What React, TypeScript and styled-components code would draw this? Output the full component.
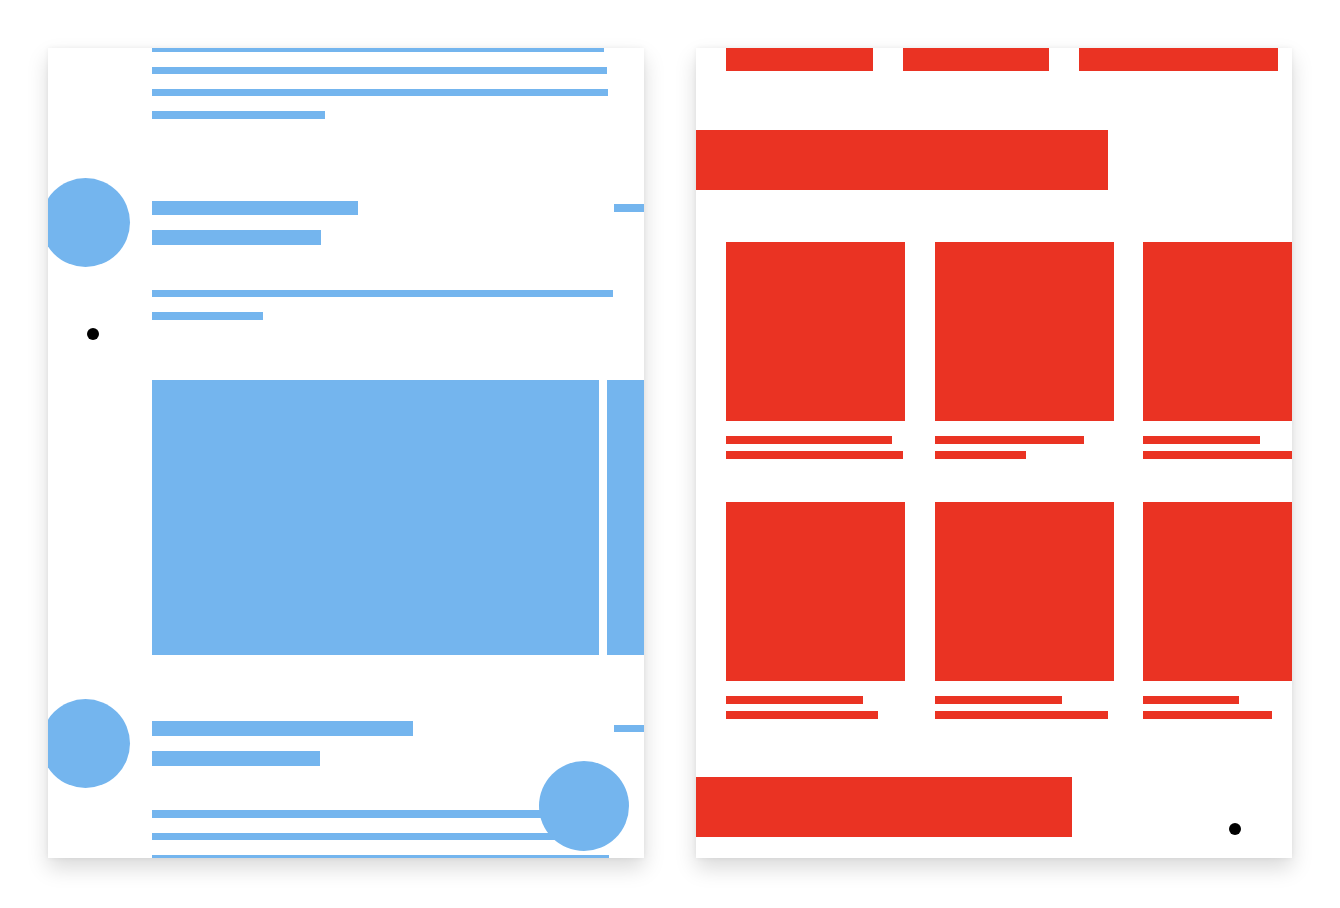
import React from 'react'
import styled, { createGlobalStyle } from 'styled-components'

const BLUE = '#74b5ee'
const RED = '#ea3323'

const GlobalStyle = createGlobalStyle`
	html, body {
		margin: 0;
		padding: 0;
		background: #ffffff;
		font-family: 'Liberation Sans', Arial, sans-serif;
	}
`

const Stage = styled.div`
	display: flex;
	gap: 52px;
	padding: 48px 0 0 48px;
	width: 1340px;
	height: 908px;
	box-sizing: border-box;
`

const Sheet = styled.div`
	position: relative;
	width: 596px;
	height: 810px;
	flex: 0 0 auto;
	overflow: hidden;
	background: #ffffff;
	box-shadow: 0 10px 20px rgba(0, 0, 0, 0.15), 0 0 5px rgba(0, 0, 0, 0.06);
`

const Bar = styled.div<{ $w?: number; $h?: number; $color: string }>`
	flex: 0 0 auto;
	width: ${(p) => (p.$w ? `${p.$w}px` : 'auto')};
	height: ${(p) => p.$h ?? 7}px;
	background: ${(p) => p.$color};
`

const Dot = styled.div`
	width: 12px;
	height: 12px;
	border-radius: 50%;
	background: #000;
	flex: 0 0 auto;
`

/* ---------- feed (left sheet) ---------- */

const Feed = styled.div`
	display: flex;
	flex-direction: column;
	margin-top: -3px;
`

const TextBlock = styled.div<{ $top?: number }>`
	display: flex;
	flex-direction: column;
	gap: 15px;
	padding-left: 104px;
	margin-top: ${(p) => p.$top ?? 0}px;
`

const PostHeader = styled.div<{ $top: number }>`
	display: flex;
	align-items: center;
	margin-top: ${(p) => p.$top}px;
	height: 89px;
`

const AvatarCell = styled.div`
	width: 104px;
	flex: 0 0 auto;
`

const Avatar = styled.div`
	width: 89px;
	height: 89px;
	border-radius: 50%;
	background: ${BLUE};
	margin-left: -7px;
`

const Titles = styled.div`
	flex: 1;
	display: flex;
	flex-direction: column;
	gap: 15px;
`

const TitleRow = styled.div`
	display: flex;
	justify-content: space-between;
	align-items: center;
`

const PostBody = styled.div<{ $top: number }>`
	display: grid;
	grid-template-columns: 104px 1fr;
	margin-top: ${(p) => p.$top}px;
`

const Gutter = styled.div`
	padding: 38px 0 0 39px;
`

const BodyCol = styled.div`
	display: flex;
	flex-direction: column;
	gap: 15px;
`

const Media = styled.div`
	display: flex;
	gap: 8px;
	height: 275px;
	margin-top: 45px;
`

const MediaTile = styled.div<{ $w?: number }>`
	background: ${BLUE};
	${(p) => (p.$w ? `width: ${p.$w}px; flex: 0 0 auto;` : 'flex: 1;')}
`

const Fab = styled.div`
	position: absolute;
	left: 491px;
	top: 713px;
	width: 90px;
	height: 90px;
	border-radius: 50%;
	background: ${BLUE};
`

/* ---------- shop (right sheet) ---------- */

const Shop = styled.div`
	display: flex;
	flex-direction: column;
`

const Nav = styled.div`
	display: flex;
	gap: 30px;
	padding-left: 30px;
	margin-top: -7px;
`

const Banner = styled.div<{ $w: number; $top: number }>`
	width: ${(p) => p.$w}px;
	height: 60px;
	background: ${RED};
	margin-top: ${(p) => p.$top}px;
`

const Grid = styled.div`
	display: grid;
	grid-template-columns: repeat(3, 179px);
	column-gap: 29.5px;
	row-gap: 43px;
	padding-left: 30px;
	margin-top: 52px;
`

const Product = styled.div`
	display: flex;
	flex-direction: column;
`

const Thumb = styled.div`
	width: 179px;
	height: 179px;
	background: ${RED};
`

const Caption = styled.div`
	display: flex;
	flex-direction: column;
	gap: 7px;
	margin-top: 15px;
`

const Footer = styled.div`
	display: flex;
	justify-content: space-between;
	align-items: flex-end;
	margin-top: 58px;
	padding-right: 51px;

	${Dot} {
		margin-bottom: 2px;
	}
`

const products = [
	[166, 177],
	[149, 91],
	[117, 160],
	[137, 152],
	[127, 173],
	[96, 129],
]

const FeedSheet: React.FC = () => (
	<Sheet>
		<Feed>
			<TextBlock>
				<Bar $color={BLUE} $w={452} />
				<Bar $color={BLUE} $w={455} />
				<Bar $color={BLUE} $w={456} />
				<Bar $color={BLUE} $w={173} $h={8} />
			</TextBlock>

			<PostHeader $top={59}>
				<AvatarCell>
					<Avatar />
				</AvatarCell>
				<Titles>
					<TitleRow>
						<Bar $color={BLUE} $w={206} $h={14} />
						<Bar $color={BLUE} $w={30} $h={8} />
					</TitleRow>
					<Bar $color={BLUE} $w={169} $h={15} />
				</Titles>
			</PostHeader>

			<PostBody $top={23}>
				<Gutter>
					<Dot />
				</Gutter>
				<BodyCol>
					<Bar $color={BLUE} $w={461} />
					<Bar $color={BLUE} $w={111} $h={8} />
					<Media>
						<MediaTile $w={447} />
						<MediaTile />
					</Media>
				</BodyCol>
			</PostBody>

			<PostHeader $top={44}>
				<AvatarCell>
					<Avatar />
				</AvatarCell>
				<Titles>
					<TitleRow>
						<Bar $color={BLUE} $w={261} $h={15} />
						<Bar $color={BLUE} $w={30} $h={7} />
					</TitleRow>
					<Bar $color={BLUE} $w={168} $h={15} />
				</Titles>
			</PostHeader>

			<TextBlock $top={22}>
				<Bar $color={BLUE} $w={456} $h={8} />
				<Bar $color={BLUE} $w={456} />
				<Bar $color={BLUE} $w={457} />
			</TextBlock>
		</Feed>
		<Fab />
	</Sheet>
)

const ShopSheet: React.FC = () => (
	<Sheet>
		<Shop>
			<Nav>
				<Bar $color={RED} $w={147} $h={30} />
				<Bar $color={RED} $w={146} $h={30} />
				<Bar $color={RED} $w={199} $h={30} />
			</Nav>
			<Banner $w={412} $top={59} />
			<Grid>
				{products.map(([a, b], i) => (
					<Product key={i}>
						<Thumb />
						<Caption>
							<Bar $color={RED} $w={a} $h={8} />
							<Bar $color={RED} $w={b} $h={8} />
						</Caption>
					</Product>
				))}
			</Grid>
			<Footer>
				<Banner $w={376} $top={0} />
				<Dot />
			</Footer>
		</Shop>
	</Sheet>
)

export default function App() {
	return (
		<>
			<GlobalStyle />
			<Stage>
				<FeedSheet />
				<ShopSheet />
			</Stage>
		</>
	)
}
